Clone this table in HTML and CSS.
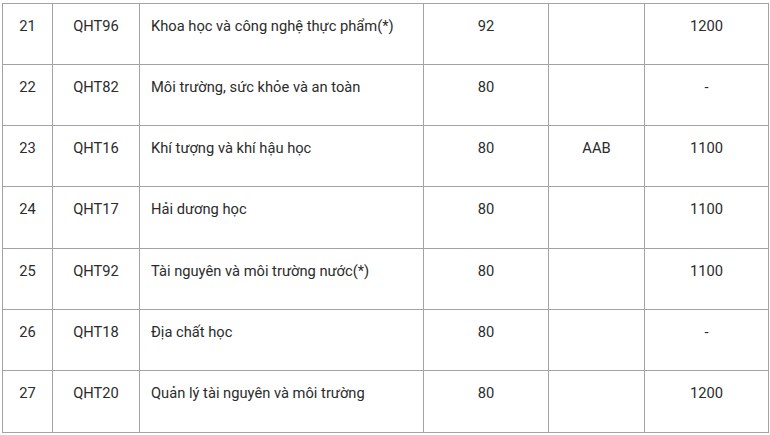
FILE: index.html
```html
<!DOCTYPE html>
<html lang="vi">
<head>
<meta charset="utf-8">
<link rel="stylesheet" href="styles.css">
</head>
<body>
<table class="tbl">
  <colgroup>
    <col class="c1"><col class="c2"><col class="c3"><col class="c4"><col class="c5"><col class="c6">
  </colgroup>
  <tbody>
    <tr><td class="ctr">21</td><td class="ctr">QHT96</td><td>Khoa học và công nghệ thực phẩm(*)</td><td class="ctr">92</td><td class="ctr"></td><td class="ctr">1200</td></tr>
    <tr><td class="ctr">22</td><td class="ctr">QHT82</td><td>Môi trường, sức khỏe và an toàn</td><td class="ctr">80</td><td class="ctr"></td><td class="ctr">-</td></tr>
    <tr><td class="ctr">23</td><td class="ctr">QHT16</td><td>Khí tượng và khí hậu học</td><td class="ctr">80</td><td class="ctr">AAB</td><td class="ctr">1100</td></tr>
    <tr><td class="ctr">24</td><td class="ctr">QHT17</td><td>Hải dương học</td><td class="ctr">80</td><td class="ctr"></td><td class="ctr">1100</td></tr>
    <tr><td class="ctr">25</td><td class="ctr">QHT92</td><td>Tài nguyên và môi trường nước(*)</td><td class="ctr">80</td><td class="ctr"></td><td class="ctr">1100</td></tr>
    <tr><td class="ctr">26</td><td class="ctr">QHT18</td><td>Địa chất học</td><td class="ctr">80</td><td class="ctr"></td><td class="ctr">-</td></tr>
    <tr><td class="ctr">27</td><td class="ctr">QHT20</td><td>Quản lý tài nguyên và môi trường</td><td class="ctr">80</td><td class="ctr"></td><td class="ctr">1200</td></tr>
  </tbody>
</table>
</body>
</html>
```
FILE: styles.css
```css
html, body {
  margin: 0;
  padding: 0;
  background: #ffffff;
}
body {
  padding: 2.5px 0 0 2px;
  font-family: Roboto, "Noto Sans", sans-serif;
  font-size: 14.7px;
  color: #2b2b2b;
}
.tbl {
  border-collapse: collapse;
  table-layout: fixed;
  width: 766px;
}
.c1 { width: 50px; }
.c2 { width: 87px; }
.c3 { width: 284px; }
.c4 { width: 125px; }
.c5 { width: 96px; }
.c6 { width: 124px; }
.tbl td {
  border: 1.5px solid #a3a3a3;
  height: 61.3px;
  box-sizing: border-box;
  vertical-align: top;
  padding: 11px 11px 0 11px;
  line-height: 22px;
}
.tbl td.ctr {
  text-align: center;
}
```
